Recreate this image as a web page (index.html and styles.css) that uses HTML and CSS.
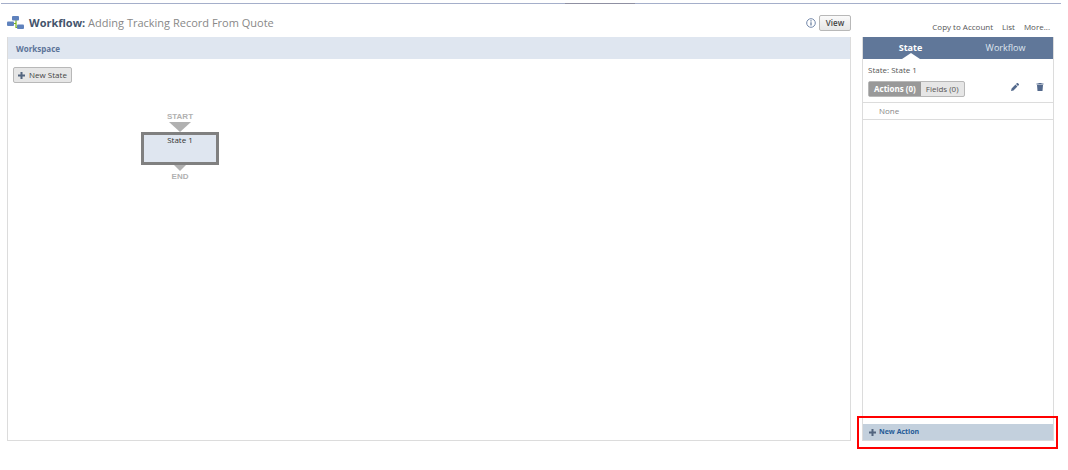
FILE: index.html
```html
<!DOCTYPE html>
<html lang="en">

<head>
  <meta charset="UTF-8">
  <meta name="viewport" content="width=device-width, initial-scale=1.0">
  <title>Workflow</title>
  <link rel="stylesheet" href="styles.css">
</head>

<body>
  <div class="topline"><span class="mark"></span></div>
  <div class="page">
    <main class="left">
      <header class="header">
        <svg class="logo" width="17" height="14" viewBox="0 0 17 14">
          <path d="M5 7.500h4M9 4v7.500h3" fill="none" stroke="#7ab51d" stroke-width="1.200" />
          <rect x="5" y="0" width="7" height="4.500" rx="1" fill="#5f82bd" />
          <rect x="0" y="5.500" width="7" height="4.500" rx="1" fill="#5f82bd" />
          <rect x="10" y="8.500" width="7" height="4.500" rx="1" fill="#5f82bd" />
        </svg>
        <h1 class="title"><b>Workflow:</b> Adding Tracking Record From Quote</h1>
        <svg class="info" width="10" height="10" viewBox="0 0 10 10">
          <circle cx="5" cy="5" r="4.300" fill="none" stroke="#7388aa" />
          <path d="M5 4.300v3.200M5 2.300v1.100" stroke="#607799" stroke-width="1.200" />
        </svg>
        <button class="btn view" type="button">View</button>
      </header>
      <section class="workspace">
        <h2 class="bar">Workspace</h2>
        <div class="canvas">
          <button class="btn new-state" type="button">
            <svg width="7" height="7" viewBox="0 0 7 7"><path d="M3.500 0v7M0 3.500h7" stroke="#53657f" stroke-width="2" /></svg>
            New State
          </button>
          <div class="node">
            <span class="label">START</span>
            <svg width="22" height="10" viewBox="0 0 22 10"><path d="M0 0h22L11 10z" fill="#b1b1b1" /></svg>
            <div class="state">State 1</div>
            <svg width="12" height="6" viewBox="0 0 12 6"><path d="M0 0h12L6 6z" fill="#b1b1b1" /></svg>
            <span class="label">END</span>
          </div>
        </div>
      </section>
    </main>

    <aside class="right">
      <nav class="links">
        <a href="#">Copy to Account</a>
        <a href="#">List</a>
        <a href="#">More...</a>
      </nav>
      <div class="panel">
        <div class="tabs">
          <button class="tab active" type="button">State</button>
          <button class="tab" type="button">Workflow</button>
        </div>
        <div class="info-box">
          <p class="name">State: State 1</p>
          <div class="tools">
            <div class="group">
              <button class="seg on" type="button">Actions (0)</button>
              <button class="seg" type="button">Fields (0)</button>
            </div>
            <button class="icon edit" type="button" aria-label="Edit">
              <svg width="8" height="8" viewBox="0 0 8 8"><path d="M0 8L.6 5.500 4.500 1.600 6.400 3.500 2.500 7.400zM5 1.100L6 .1Q6.500-.2 7 .2L7.800 1Q8.200 1.500 7.900 2L6.900 3z" fill="#53698c" /></svg>
            </button>
            <button class="icon" type="button" aria-label="Delete">
              <svg width="8" height="8" viewBox="0 0 8 8"><path d="M.5.500H2.500V0h3V.5h2v1h-7zM1 2h6L6.500 8h-5z" fill="#53698c" /></svg>
            </button>
          </div>
        </div>
        <div class="empty">None</div>
        <div class="footer">
          <button class="new-action" type="button">
            <svg width="7" height="7" viewBox="0 0 7 7"><path d="M3.500 0v7M0 3.500h7" stroke="#53657f" stroke-width="2" /></svg>
            New Action
          </button>
          <span class="highlight"></span>
        </div>
      </div>
    </aside>
  </div>
</body>

</html>
```
FILE: styles.css
```css
* {
  box-sizing: border-box;
}

body {
  margin: 0;
  min-height: 100vh;
  display: flex;
  flex-direction: column;
  padding-top: 3px;
  background-color: #fff;
  color: #555;
  font: 8px/12px "Open Sans", sans-serif;
}

h1,
h2,
p {
  margin: 0;
}

button {
  font: inherit;
  color: inherit;
  margin: 0;
  padding: 0;
  border: 0;
  background: none;
  cursor: pointer;
}

svg {
  display: block;
  flex: none;
}

a {
  color: #555;
  text-decoration: none;
}

.topline {
  height: 1px;
  margin: 0 7px 0 1px;
  background-color: #a5afca;
  display: flex;
  justify-content: center;
}

.topline .mark {
  width: 70px;
  margin-left: 138px;
  background-color: #8f90a2;
}

.page {
  flex: 1;
  display: flex;
  gap: 11px;
  padding: 0 14px 29px 7px;
}

.left {
  flex: 1;
  display: flex;
  flex-direction: column;
}

.header {
  height: 33px;
  padding-top: 5px;
  display: flex;
  align-items: center;
}

.logo {
  margin-right: 5px;
}

.title {
  flex: 1;
  font-size: 11px;
  line-height: 16px;
  font-weight: 400;
  color: #888;
}

.title b {
  color: #44546c;
}

.btn {
  display: flex;
  align-items: center;
  justify-content: center;
  gap: 4px;
  height: 16px;
  border: 1px solid #b8b8b8;
  border-radius: 2px;
  background-color: #e6e6e6;
  color: #444;
}

.view {
  width: 32px;
  margin-left: 3px;
  font-weight: 600;
  background: linear-gradient(#fafafa, #e6e6e6);
}

.workspace {
  flex: 1;
  display: flex;
  flex-direction: column;
  border: 1px solid #dcdcdc;
  border-top: 0;
}

.bar {
  height: 22px;
  padding-left: 8px;
  background-color: #dfe6f0;
  color: #5c7499;
  font-size: 8px;
  line-height: 24px;
}

.canvas {
  flex: 1;
  position: relative;
  padding: 8px 5px;
}

.new-state {
  width: 59px;
}

.node {
  position: absolute;
  left: 133px;
  top: 52px;
  width: 78px;
  display: flex;
  flex-direction: column;
  align-items: center;
}

.label {
  font: bold 8px/11px "Liberation Sans", sans-serif;
  color: #b1b1b1;
}

.state {
  width: 100%;
  height: 33px;
  border: 3px solid #808080;
  background-color: #dfe6f0;
  color: #333;
  line-height: 10px;
  text-align: center;
}

.right {
  width: 192px;
  display: flex;
  flex-direction: column;
}

.links {
  height: 33px;
  padding: 17px 4px 0 0;
  display: flex;
  justify-content: flex-end;
  gap: 9px;
}

.panel {
  flex: 1;
  display: flex;
  flex-direction: column;
  border: 1px solid #dcdcdc;
  border-top: 0;
}

.tabs {
  display: flex;
  height: 22px;
  background-color: #607799;
}

.tab {
  flex: 1;
  position: relative;
  color: #dfe6f0;
  font-size: 9px;
}

.tab.active {
  color: #fff;
  font-weight: 700;
}

.tab.active::after {
  content: '';
  position: absolute;
  left: 50%;
  bottom: 0;
  margin-left: -9px;
  border: 9px solid transparent;
  border-top: 0;
  border-bottom: 6px solid #fff;
}

.info-box {
  padding: 5px;
}

.tools {
  display: flex;
  align-items: flex-start;
  padding-right: 4px;
  margin-top: 5px;
}

.group {
  display: flex;
  margin-right: auto;
  border: 1px solid #b8b8b8;
  border-radius: 2px;
  background-color: #e6e6e6;
}

.seg {
  height: 14px;
  padding: 0 5px;
}

.seg.on {
  background-color: #999;
  color: #fff;
  font-weight: 700;
}

.icon {
  padding-top: 2px;
}

.edit {
  margin-right: 17px;
}

.empty {
  height: 18px;
  padding-left: 16px;
  border-top: 1px solid #dcdcdc;
  border-bottom: 1px solid #dcdcdc;
  color: #888;
  line-height: 16px;
}

.footer {
  position: relative;
  margin-top: auto;
}

.new-action {
  width: 100%;
  height: 16px;
  padding-left: 6px;
  display: flex;
  align-items: center;
  gap: 3px;
  background-color: #c3d0dd;
  color: #255b96;
  font-size: 7px;
  font-weight: 700;
}

/* red frame over the new action row */
.highlight {
  position: absolute;
  inset: -8px -5px -9px -6px;
  border: 2px solid #f00;
  pointer-events: none;
}
```
